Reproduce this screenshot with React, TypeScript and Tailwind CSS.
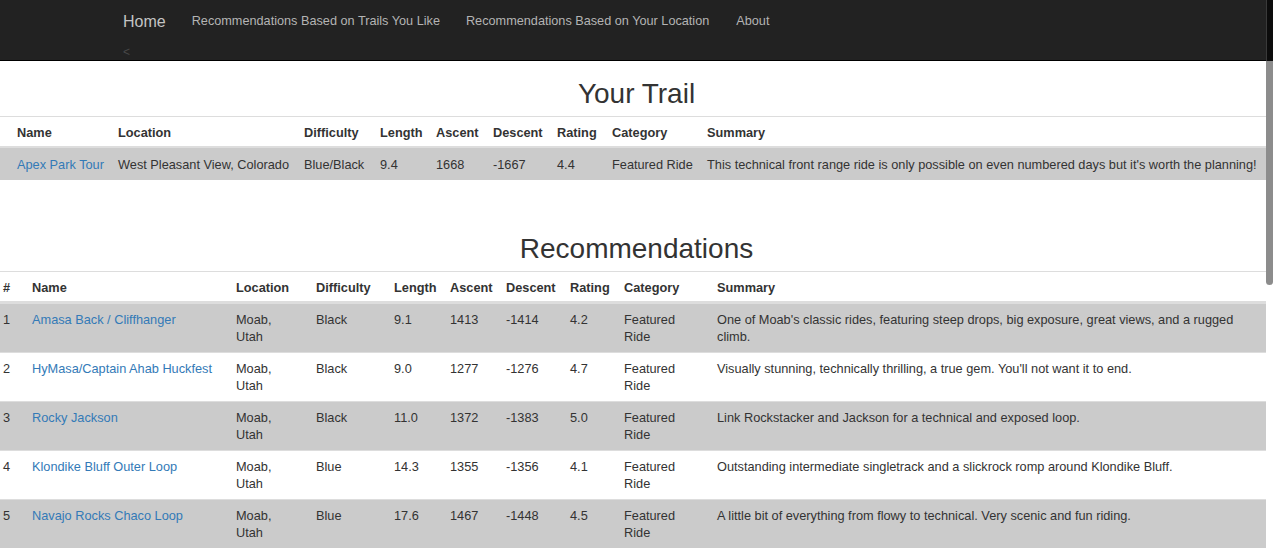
import React from 'react';

interface Trail {
  name: string;
  location: string;
  difficulty: string;
  length: string;
  ascent: string;
  descent: string;
  rating: string;
  category: string;
  summary: string;
}

const yourTrail: Trail = {
  name: 'Apex Park Tour',
  location: 'West Pleasant View, Colorado',
  difficulty: 'Blue/Black',
  length: '9.4',
  ascent: '1668',
  descent: '-1667',
  rating: '4.4',
  category: 'Featured Ride',
  summary: "This technical front range ride is only possible on even numbered days but it's worth the planning!",
};

const recommendations: Trail[] = [
  {
    name: 'Amasa Back / Cliffhanger',
    location: 'Moab, Utah',
    difficulty: 'Black',
    length: '9.1',
    ascent: '1413',
    descent: '-1414',
    rating: '4.2',
    category: 'Featured Ride',
    summary: "One of Moab's classic rides, featuring steep drops, big exposure, great views, and a rugged climb.",
  },
  {
    name: 'HyMasa/Captain Ahab Huckfest',
    location: 'Moab, Utah',
    difficulty: 'Black',
    length: '9.0',
    ascent: '1277',
    descent: '-1276',
    rating: '4.7',
    category: 'Featured Ride',
    summary: "Visually stunning, technically thrilling, a true gem. You'll not want it to end.",
  },
  {
    name: 'Rocky Jackson',
    location: 'Moab, Utah',
    difficulty: 'Black',
    length: '11.0',
    ascent: '1372',
    descent: '-1383',
    rating: '5.0',
    category: 'Featured Ride',
    summary: 'Link Rockstacker and Jackson for a technical and exposed loop.',
  },
  {
    name: 'Klondike Bluff Outer Loop',
    location: 'Moab, Utah',
    difficulty: 'Blue',
    length: '14.3',
    ascent: '1355',
    descent: '-1356',
    rating: '4.1',
    category: 'Featured Ride',
    summary: 'Outstanding intermediate singletrack and a slickrock romp around Klondike Bluff.',
  },
  {
    name: 'Navajo Rocks Chaco Loop',
    location: 'Moab, Utah',
    difficulty: 'Blue',
    length: '17.6',
    ascent: '1467',
    descent: '-1448',
    rating: '4.5',
    category: 'Featured Ride',
    summary: 'A little bit of everything from flowy to technical. Very scenic and fun riding.',
  },
];

const headers = ['Name', 'Location', 'Difficulty', 'Length', 'Ascent', 'Descent', 'Rating', 'Category', 'Summary'];

const trailCells = (t: Trail) => [t.location, t.difficulty, t.length, t.ascent, t.descent, t.rating, t.category];

const gridOne = 'grid grid-cols-[17px_101px_186px_76px_56px_57px_64px_55px_95px_1fr] w-[1266px] whitespace-nowrap';
const gridTwo = 'grid grid-cols-[29px_204px_80px_78px_56px_56px_64px_54px_93px_1fr] w-[1266px] pl-[3px] pr-[8px]';

const App: React.FC = () => {
  return (
    <div className="relative min-h-[548px] bg-white text-[12.75px] leading-[17px] text-[#333] font-['Liberation_Sans',Arial,sans-serif]">
      {/* navbar */}
      <nav className="h-[61px] bg-[#222] border-b border-black pl-[110px]">
        <div className="flex h-[41px] pt-[1px] items-center text-[12.7px]">
          <a className="px-[13px] pt-[1px] text-[16px] text-[#c4c4c4]">Home</a>
          <a className="px-[13px] text-[#b4b4b4]">Recommendations Based on Trails You Like</a>
          <a className="px-[13px] text-[#b4b4b4]">Recommendations Based on Your Location</a>
          <a className="pl-[14px] pr-[13px] text-[#b4b4b4]">About</a>
        </div>
        <div className="pl-[13px] pt-[3px] text-[12px] text-[#484848]">&lt;</div>
      </nav>

      {/* your trail */}
      <h1 className="mt-[17px] mb-[7px] text-center text-[28px] leading-[31px]">Your Trail</h1>
      <div className={`${gridOne} border-t border-[#ddd] border-b-2 pt-[7px] pb-[5px] font-bold`}>
        <div />
        {headers.map((h) => (
          <div key={h}>{h}</div>
        ))}
      </div>
      <div className={`${gridOne} bg-[#cbcbcb] pt-[8px] pb-[7px]`}>
        <div />
        <div className="text-[#337ab7]">{yourTrail.name}</div>
        {trailCells(yourTrail).map((c, i) => (
          <div key={i}>{c}</div>
        ))}
        <div>{yourTrail.summary}</div>
      </div>

      {/* recommendations */}
      <h1 className="mt-[53px] mb-[7px] text-center text-[28px] leading-[31px]">Recommendations</h1>
      <div className={`${gridTwo} border-t border-[#ddd] border-b-2 pt-[7px] pb-[5px] font-bold`}>
        <div>#</div>
        {headers.map((h) => (
          <div key={h}>{h}</div>
        ))}
      </div>
      {recommendations.map((t, idx) => (
        <div
          key={t.name}
          className={`${gridTwo} border-t border-[#ddd] pt-[7px] pb-[7px] ${idx % 2 === 0 ? 'bg-[#cbcbcb]' : 'bg-white'}`}
        >
          <div>{idx + 1}</div>
          <div className="pr-[14px] text-[#337ab7]">{t.name}</div>
          {trailCells(t).map((c, i) => (
            <div key={i} className={i === 0 ? 'pr-[17px]' : 'pr-[14px]'}>
              {c}
            </div>
          ))}
          <div>{t.summary}</div>
        </div>
      ))}

      {/* overlay scrollbar */}
      <div className="absolute right-0 top-0 w-[7px] h-[61px] bg-[#0c0c0c] border-l border-[#3a3a3a]" />
      <div className="absolute right-0 top-[61px] w-[7px] h-[224px] bg-black/45 rounded-b-[4px]" />
    </div>
  );
};

export default App;
